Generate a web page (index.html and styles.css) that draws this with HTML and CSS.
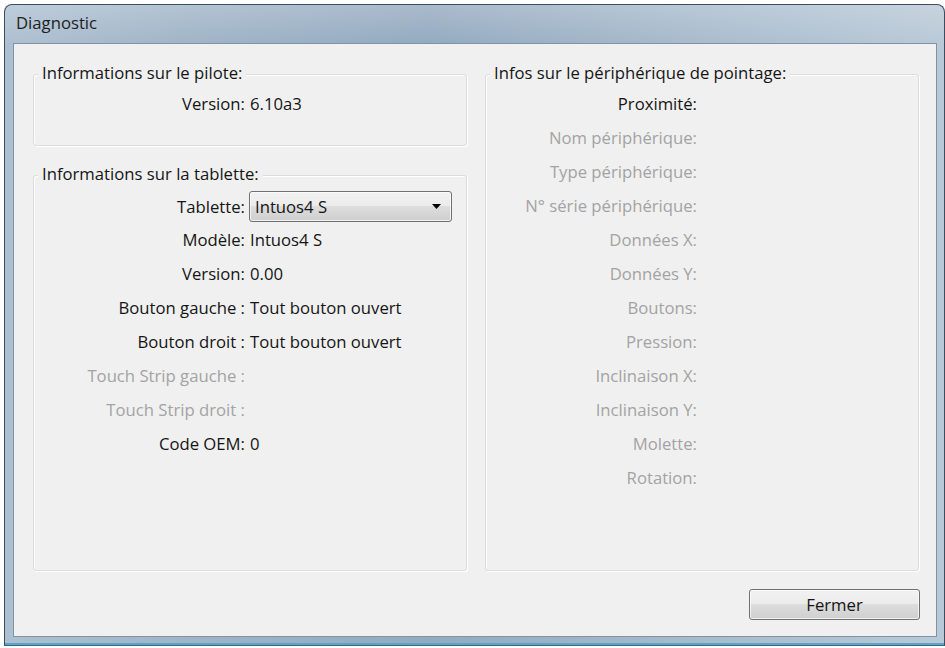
FILE: index.html
```html
<!DOCTYPE html>
<html lang="fr">
<head>
  <meta charset="UTF-8">
  <meta name="viewport" content="width=device-width, initial-scale=1.0">
  <title>Diagnostic</title>
  <link rel="stylesheet" href="styles.css">
</head>
<body>
  <div class="window">
    <div class="titlebar">Diagnostic</div>

    <div class="client">
      <div class="columns">
        <div class="column">
          <!-- Driver info -->
          <div class="group group-small">
            <div class="group-title">Informations sur le pilote:</div>
            <div class="fields">
              <span class="label">Version:</span><span class="value">6.10a3</span>
            </div>
          </div>

          <!-- Tablet info -->
          <div class="group group-grow">
            <div class="group-title">Informations sur la tablette:</div>
            <div class="fields fields-tablet">
              <span class="label">Tablette:</span>
              <div class="combo">
                <span>Intuos4 S</span>
                <svg width="9" height="5" viewBox="0 0 9 5"><path d="M0 0h9L4.5 5z" fill="#000"/></svg>
              </div>
              <span class="label">Modèle:</span><span class="value">Intuos4 S</span>
              <span class="label">Version:</span><span class="value">0.00</span>
              <span class="label">Bouton gauche :</span><span class="value">Tout bouton ouvert</span>
              <span class="label">Bouton droit :</span><span class="value">Tout bouton ouvert</span>
              <span class="label disabled">Touch Strip gauche :</span><span class="value"></span>
              <span class="label disabled">Touch Strip droit :</span><span class="value"></span>
              <span class="label">Code OEM:</span><span class="value">0</span>
            </div>
          </div>
        </div>

        <!-- Pointing device info -->
        <div class="group">
          <div class="group-title">Infos sur le périphérique de pointage:</div>
          <div class="fields">
            <span class="label">Proximité:</span><span class="value"></span>
            <span class="label disabled">Nom périphérique:</span><span class="value"></span>
            <span class="label disabled">Type périphérique:</span><span class="value"></span>
            <span class="label disabled">N° série périphérique:</span><span class="value"></span>
            <span class="label disabled">Données X:</span><span class="value"></span>
            <span class="label disabled">Données Y:</span><span class="value"></span>
            <span class="label disabled">Boutons:</span><span class="value"></span>
            <span class="label disabled">Pression:</span><span class="value"></span>
            <span class="label disabled">Inclinaison X:</span><span class="value"></span>
            <span class="label disabled">Inclinaison Y:</span><span class="value"></span>
            <span class="label disabled">Molette:</span><span class="value"></span>
            <span class="label disabled">Rotation:</span><span class="value"></span>
          </div>
        </div>
      </div>

      <div class="actions">
        <button class="btn">Fermer</button>
      </div>
    </div>
  </div>
</body>
</html>
```

FILE: styles.css
```css
body {
    margin: 0;
    background: #ffffff;
    font-family: "Open Sans", "Noto Sans", sans-serif;
    font-size: 16.7px;
    color: #151515;
}

/* Window frame */
.window {
    margin: 4px 0 0 4px;
    width: 941px;
    height: 642px;
    box-sizing: border-box;
    border: 1px solid #3b4d5f;
    border-bottom-color: #2f6e8c;
    border-radius: 8px 8px 0 0;
    padding: 0 7px 8px 8px;
    display: flex;
    flex-direction: column;
    background:
        linear-gradient(to bottom, rgba(255, 255, 255, 0.2), rgba(255, 255, 255, 0) 40px),
        linear-gradient(to right, #adc0d1 0%, #9fb4c7 20%, #93aabf 45%, #a5b9cb 70%, #b9c9d7 100%);
    box-shadow: inset 0 -2px 0 #5fa3c2;
}

.titlebar {
    height: 38px;
    line-height: 36px;
    padding-left: 3px;
    color: #1e1e1e;
}

/* Client area */
.client {
    flex: 1;
    display: flex;
    flex-direction: column;
    background: #f0f0f0;
    border: 1px solid #7e93a7;
    padding: 30px 16px 16px 19px;
}

.columns {
    flex: 1;
    display: grid;
    grid-template-columns: 434px 434px;
    column-gap: 18px;
}

.column {
    display: flex;
    flex-direction: column;
}

/* Group boxes */
.group {
    border: 1px solid #dadde0;
    border-radius: 3px;
    box-shadow: inset 1px 1px 0 #ffffff, 1px 1px 0 #ffffff;
}

.group-small {
    height: 70px;
    margin-bottom: 29px;
}

.group-grow {
    flex: 1;
}

.group-title {
    width: fit-content;
    margin: -12px 0 0 4px;
    padding: 0 4px;
    line-height: 20px;
    background: #f0f0f0;
}

.fields {
    display: grid;
    grid-template-columns: 211px 1fr;
    grid-auto-rows: 34px;
    column-gap: 5px;
    align-items: center;
    margin-top: 3px;
}

/* the combo row is a bit shorter than the text rows */
.fields-tablet {
    grid-template-rows: 32px;
    margin-top: 6px;
}

.label {
    text-align: right;
    white-space: nowrap;
}

.disabled {
    color: #a3a3a3;
}

/* Combo box */
.combo {
    width: 203px;
    height: 31px;
    box-sizing: border-box;
    display: flex;
    align-items: center;
    justify-content: space-between;
    padding: 0 10px 0 5px;
    border: 1px solid #707070;
    border-radius: 3px;
    background: linear-gradient(to bottom, #f2f2f2 0%, #ebebeb 50%, #dddddd 50%, #cfcfcf 100%);
    box-shadow: inset 0 0 0 1px rgba(255, 255, 255, 0.7);
    margin-left: -1px;
}

/* Bottom button */
.actions {
    display: flex;
    justify-content: flex-end;
    margin-top: 18px;
}

.btn {
    width: 171px;
    height: 31px;
    font-family: inherit;
    font-size: 16.7px;
    color: #151515;
    border: 1px solid #707070;
    border-radius: 3px;
    background: linear-gradient(to bottom, #f2f2f2 0%, #ebebeb 50%, #dddddd 50%, #cfcfcf 100%);
    box-shadow: inset 0 0 0 1px rgba(255, 255, 255, 0.7);
}
```
